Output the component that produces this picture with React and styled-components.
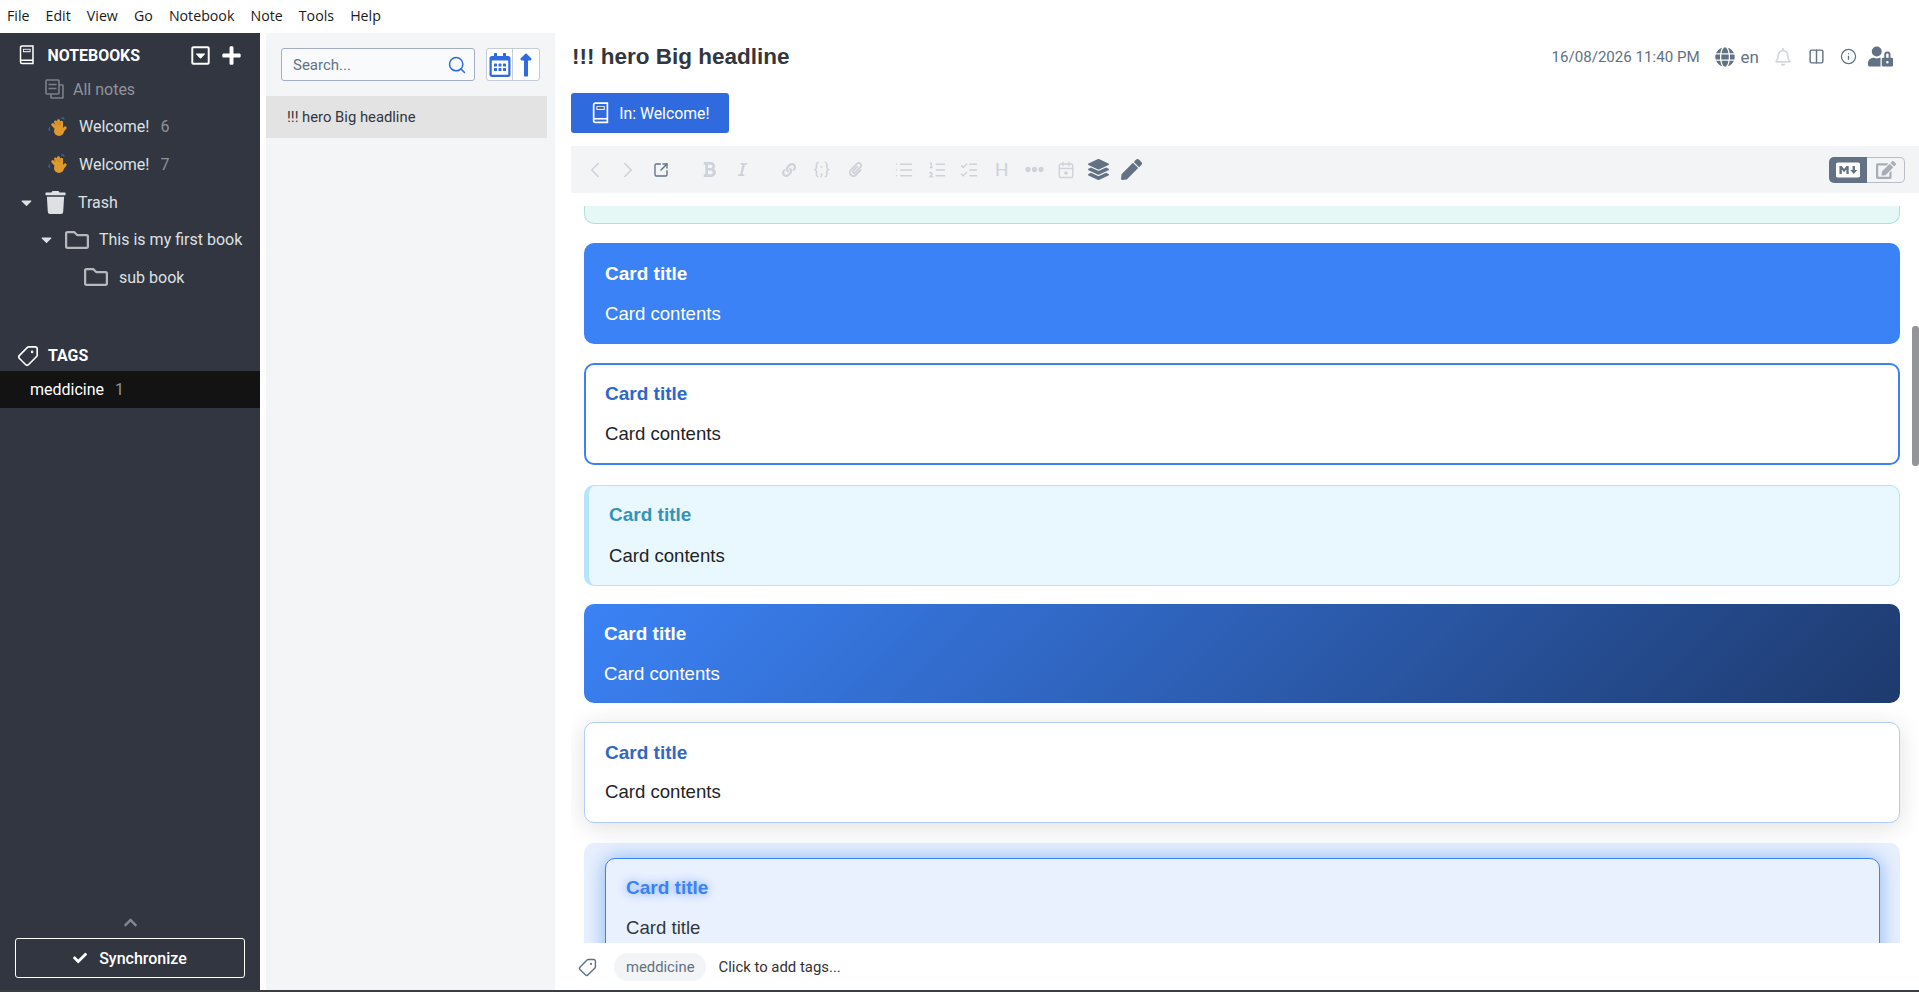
import React from 'react'
import styled, { createGlobalStyle } from 'styled-components'
import {
  FaRegCaretSquareDown,
  FaPlus,
  FaTrash,
  FaRegFolder,
  FaCaretDown,
  FaCheck,
  FaRegCalendarAlt,
  FaLongArrowAltUp,
  FaBold,
  FaItalic,
  FaLink,
  FaPaperclip,
  FaEllipsisH,
  FaLayerGroup,
  FaPen,
  FaGlobe,
  FaRegBell,
  FaUserLock,
  FaMarkdown,
  FaEdit,
  FaChevronUp,
} from 'react-icons/fa'
import {
  ChevronLeft,
  ChevronRight,
  SquareArrowOutUpRight,
  Search,
  Columns2,
  Info,
  Tag,
  List,
  ListOrdered,
  ListChecks,
  CalendarPlus2,
} from 'lucide-react'

const GlobalStyle = createGlobalStyle`
  html, body {
    margin: 0;
    padding: 0;
    height: 100%;
    overflow: hidden;
    background: #fff;
    font-family: Roboto, "Liberation Sans", sans-serif;
  }
  #root { height: 100%; }
  * { box-sizing: border-box; }
`

const AppWrapper = styled.div`
  display: flex;
  flex-direction: column;
  height: 992px;
  width: 1919px;
  border-bottom: 2px solid #3a3d42;
`

const MenuBar = styled.div`
  display: flex;
  align-items: center;
  height: 33px;
  padding: 0 0 2px 7px;
  gap: 16.1px;
  font-family: "Open Sans", sans-serif;
  font-size: 14.2px;
  color: #1a1a1a;
`

const Panes = styled.div`
  flex: 1;
  display: flex;
  min-height: 0;
`

const Sidebar = styled.div`
  width: 260px;
  margin-right: 6px;
  background: #313640;
  color: #dee0e3;
  display: flex;
  flex-direction: column;
  font-size: 16px;
`

const SideHeader = styled.div`
  display: flex;
  align-items: center;
  height: ${({ $h }) => $h}px;
  padding: ${({ $top }) => $top || 0}px 18px 0 ${({ $left }) => $left}px;
  color: #fff;
  font-weight: 700;
  font-size: 15.9px;
`

const HeaderLabel = styled.span`
  flex: 1;
  margin-left: ${({ $gap }) => $gap}px;
`

const HeaderTools = styled.div`
  display: flex;
  align-items: center;
  gap: 10px;
`

const TreeRow = styled.div`
  display: flex;
  align-items: center;
  height: 37.6px;
  padding-left: ${({ $indent }) => $indent}px;
  color: ${({ $muted }) => ($muted ? '#8f939b' : '#dee0e3')};
`

const TreeCaret = styled.span`
  display: flex;
  justify-content: center;
  width: 20px;
  margin-left: -3px;
  margin-right: 9px;
  color: #dee0e3;
  font-size: 17px;
`

const TreeIcon = styled.span`
  display: flex;
  justify-content: center;
  width: ${({ $w }) => $w}px;
  margin-right: ${({ $mr }) => $mr}px;
`

const Count = styled.span`
  margin-left: 11px;
  color: #8f939b;
`

const Spacer = styled.div`
  height: ${({ $h }) => $h}px;
`

const TagRow = styled.div`
  display: flex;
  align-items: center;
  height: 37px;
  padding-left: 30px;
  background: #131313;
  color: #fff;
`

const SideBottom = styled.div`
  margin-top: auto;
  padding: 0 15px 12px 15px;
  display: flex;
  flex-direction: column;
  align-items: center;
`

const ChevronWrap = styled.div`
  display: flex;
  color: #85878d;
  font-size: 15px;
  margin-bottom: 8px;
`

const SyncButton = styled.button`
  width: 100%;
  height: 40px;
  background: transparent;
  border: 1px solid #fff;
  border-radius: 3px;
  color: #fff;
  font: 500 16px Roboto, sans-serif;
  display: flex;
  align-items: center;
  justify-content: center;
  gap: 12px;
`

const NoteList = styled.div`
  width: 289px;
  background: #f4f5f6;
  display: flex;
  flex-direction: column;
`

const SearchRow = styled.div`
  display: flex;
  align-items: center;
  height: 63px;
  padding-left: 15px;
  gap: 11px;
`

const SearchBox = styled.div`
  width: 194px;
  height: 33px;
  border: 1px solid #a3aec2;
  border-radius: 3px;
  background: #f9fafb;
  display: flex;
  align-items: center;
  justify-content: space-between;
  padding: 0 7px 0 11px;
  color: #627184;
  font-size: 15px;
`

const SortGroup = styled.div`
  display: flex;
  width: 54px;
  height: 33px;
  border: 1px solid #c5ccd8;
  border-radius: 3px;
  background: #fff;
  color: #2f6bdf;
`

const SortCell = styled.div`
  flex: ${({ $grow }) => $grow};
  display: flex;
  align-items: center;
  justify-content: center;
  border-left: ${({ $divided }) => ($divided ? '1px solid #c5ccd8' : 'none')};
`

const NoteItem = styled.div`
  width: 281px;
  height: 42px;
  display: flex;
  align-items: center;
  padding-left: 21px;
  background: #e3e3e3;
  color: #32373f;
  font-size: 14.8px;
`

const Editor = styled.div`
  flex: 1;
  min-width: 0;
  display: flex;
  flex-direction: column;
  padding-left: 16px;
`

const TitleRow = styled.div`
  display: flex;
  align-items: center;
  justify-content: space-between;
  height: 47px;
  padding-right: 26px;
`

const Title = styled.div`
  font: 700 22.5px "Liberation Sans", sans-serif;
  color: #32373f;
  margin-left: 1px;
`

const NoteMeta = styled.div`
  display: flex;
  align-items: center;
  color: #627184;
  font-size: 15.1px;
`

const MetaIcon = styled.span`
  display: flex;
  margin-left: ${({ $ml }) => $ml}px;
  color: ${({ $faded }) => ($faded ? '#d6d9de' : '#627184')};
`

const Lang = styled.span`
  margin-left: 6px;
  font-size: 17px;
`

const NotebookButton = styled.button`
  width: 158px;
  height: 40px;
  margin-top: 13px;
  border: none;
  border-radius: 3px;
  background: #2f6bdf;
  color: #fff;
  display: flex;
  align-items: center;
  padding-left: 21px;
  gap: 10px;
  font: 400 15.8px Roboto, sans-serif;
`

const Toolbar = styled.div`
  height: 47px;
  margin-top: 13px;
  background: #f3f4f6;
  display: flex;
  align-items: center;
  padding: 0 14px 0 7px;
`

const ToolGroup = styled.div`
  display: grid;
  grid-auto-flow: column;
  grid-auto-columns: ${({ $slot }) => $slot}px;
  margin-left: ${({ $ml }) => $ml}px;
`

const ToolIcon = styled.span`
  display: flex;
  align-items: center;
  justify-content: center;
  color: ${({ $on }) => ($on ? '#627184' : '#ced2d9')};
  font-size: ${({ $size }) => $size}px;
  letter-spacing: ${({ $track }) => $track || 0}px;
`

const ViewToggle = styled.div`
  margin-left: auto;
  display: flex;
  width: 76px;
  height: 26px;
`

const ToggleLeft = styled.div`
  width: 38px;
  background: #627184;
  border-radius: 5px 0 0 5px;
  color: #fff;
  display: flex;
  align-items: center;
  justify-content: center;
`

const ToggleRight = styled.div`
  flex: 1;
  border: 1px solid #b9bec6;
  border-left: none;
  border-radius: 0 5px 5px 0;
  color: #a9aeb6;
  display: flex;
  align-items: center;
  justify-content: center;
`

const Viewer = styled.div`
  flex: 1;
  min-height: 0;
  margin-top: 13px;
  overflow: hidden;
  padding: 0 19px 0 13px;
  position: relative;
  font-family: "Liberation Sans", sans-serif;
  font-size: 18.6px;
  color: #1f2328;
`

const ScrollThumb = styled.div`
  position: absolute;
  right: 0;
  top: 120px;
  width: 7px;
  height: 140px;
  border-radius: 3px;
  background: #939598;
`

const CardTitle = styled.div`
  font-weight: 700;
  font-size: 19px;
  margin-bottom: 18.5px;
  line-height: 22px;
`

const CardBody = styled.div`
  line-height: 22px;
`

const TealStub = styled.div`
  height: 18px;
  background: #e5f8f5;
  border: 1px solid #abe3d9;
  border-top: none;
  border-radius: 0 0 10px 10px;
  margin-bottom: 19px;
`

const Card = styled.div`
  height: 101px;
  margin-bottom: 19px;
  border-radius: 10px;
  padding: 19px 20px 0;
`

const SolidCard = styled(Card)`
  background: #3b82f6;
  color: #fff;
  padding: 20px 20px 0 21px;
  ${CardTitle} { margin-bottom: 17.5px; }
`

const OutlineCard = styled(Card)`
  height: 102px;
  background: #fff;
  border: 2px solid #3b82f6;
  padding: 18px 19px 0;
  margin-bottom: 20px;
  ${CardTitle} { color: #2f66c9; margin-bottom: 17.5px; }
`

const InfoCard = styled(Card)`
  background: #e9f7fe;
  border: 1px solid #b3e5fc;
  border-left: 5px solid #b3e5fc;
  padding: 18px 20px 0;
  margin-bottom: 18px;
  ${CardTitle} { color: #3593b9; }
`

const GradientCard = styled(Card)`
  height: 99px;
  background: linear-gradient(135deg, #3b82f6 0%, #1e3a6e 100%);
  color: #fff;
  margin-bottom: 19px;
  ${CardTitle} { margin-bottom: 18px; }
`

const ShadowCard = styled(Card)`
  height: 101px;
  background: #fff;
  border: 1px solid #b3cdfb;
  box-shadow: 0 4px 24px rgba(0, 0, 0, 0.13);
  padding: 19px 20px 0;
  ${CardTitle} { color: #3366c4; margin-bottom: 17px; }
`

const GlowOuter = styled.div`
  margin-top: 20px;
  height: 200px;
  padding: 15px 20px 0 21px;
  border-radius: 10px;
  background: #e8f0fd;
`

const GlowInner = styled.div`
  height: 180px;
  padding: 18px 20px 0;
  border: 1px solid #3b82f6;
  border-radius: 10px;
  background: #eaf1fe;
  box-shadow: 0 0 20px rgba(59, 130, 246, 0.55);
  color: #32373f;
  ${CardTitle} {
    color: #3b82f6;
    margin-bottom: 17.5px;
    text-shadow: 0 0 10px rgba(59, 130, 246, 0.7);
  }
`

const TagBar = styled.div`
  height: 47px;
  display: flex;
  align-items: center;
  padding: 1px 0 0 7px;
  color: #333;
  font-size: 14.9px;
`

const TagChip = styled.span`
  height: 28px;
  display: flex;
  align-items: center;
  margin: 0 12px 0 17px;
  padding: 0 12px;
  border-radius: 14px;
  background: #f3f4f6;
  color: #627184;
  font-size: 14.8px;
`

const FlippedTag = styled(Tag)`
  transform: scaleX(-1);
`

function NotebookIcon({ size = 20, color = 'currentColor' }) {
  return (
    <svg width={size * 0.78} height={size} viewBox="0 0 16 21" fill="none" stroke={color} strokeWidth="1.6">
      <path d="M3 1h11.5v18.5H3a1.6 1.6 0 0 1-1.6-1.6V2.6A1.6 1.6 0 0 1 3 1z" />
      <path d="M1.4 16h13" />
      <rect x="4" y="4" width="8" height="3.6" fill={color} stroke="none" opacity="0.9" />
      <rect x="5" y="5" width="6" height="1.4" fill="#313640" stroke="none" />
    </svg>
  )
}

function AllNotesIcon() {
  return (
    <svg width="19" height="20" viewBox="0 0 19 20" fill="none" stroke="#7c8089" strokeWidth="1.6">
      <rect x="1" y="1" width="13" height="14" rx="1" />
      <path d="M6 15v3.5a.5.5 0 0 0 .5.5H17.5a.5.5 0 0 0 .5-.5V6.5a.5.5 0 0 0-.5-.5H14" />
      <path d="M3.5 5.5h8M3.5 9.5h8" />
    </svg>
  )
}

function WaveHand() {
  return (
    <svg width="20" height="20" viewBox="0 0 20 20">
      <path d="M1.300 13.500c-.4-1-.2-2 .4-2.800M13.500 1c1-.2 1.900.1 2.500.8" fill="none" stroke="#2f6fb0" strokeWidth="1.200" strokeLinecap="round" />
      <g stroke="#e09a2c" strokeWidth="3" strokeLinecap="round">
        <path d="M10 13L4.800 7.600M10.500 12L7.600 5M12 12L10.500 3.800M13.500 12L13.600 5.200M14.500 14L17.200 10.800" />
      </g>
      <circle cx="11" cy="14" r="5" fill="#e09a2c" />
      <path d="M8 8.700L6.300 5.800M10.400 8L9.300 4.600M12.400 8L12.100 4.600" stroke="#b97a1c" strokeWidth=".6" />
    </svg>
  )
}

function TagsIcon({ size = 20, color = 'currentColor' }) {
  return <FlippedTag size={size} color={color} strokeWidth={1.8} />
}

const toolGroups = [
  {
    slot: 33,
    ml: 0,
    tools: [
      { id: 'back', icon: <ChevronLeft size={26} strokeWidth={1.5} /> },
      { id: 'forward', icon: <ChevronRight size={26} strokeWidth={1.5} /> },
      { id: 'external', on: true, icon: <SquareArrowOutUpRight size={16} strokeWidth={2} /> },
    ],
  },
  {
    slot: 33,
    ml: 15.5,
    tools: [
      { id: 'bold', icon: <FaBold size={17} /> },
      { id: 'italic', icon: <FaItalic size={15} /> },
    ],
  },
  {
    slot: 33,
    ml: 14,
    tools: [
      { id: 'link', icon: <FaLink size={14} /> },
      { id: 'code', size: 16, track: 1, icon: '{;}' },
      { id: 'attach', icon: <FaPaperclip size={15} /> },
    ],
  },
  {
    slot: 32.4,
    ml: 16.8,
    tools: [
      { id: 'ul', icon: <List size={20} strokeWidth={1.8} /> },
      { id: 'ol', icon: <ListOrdered size={20} strokeWidth={1.8} /> },
      { id: 'checks', icon: <ListChecks size={20} strokeWidth={1.8} /> },
      { id: 'heading', size: 19, icon: 'H' },
      { id: 'more', icon: <FaEllipsisH size={19} /> },
      { id: 'date', icon: <CalendarPlus2 size={18} strokeWidth={1.8} /> },
      { id: 'layers', on: true, icon: <FaLayerGroup size={21} /> },
      { id: 'pen', on: true, icon: <FaPen size={21} /> },
    ],
  },
]

export default function App() {
  return (
    <AppWrapper>
      <GlobalStyle />
      <MenuBar>
        {['File', 'Edit', 'View', 'Go', 'Notebook', 'Note', 'Tools', 'Help'].map((m) => (
          <span key={m}>{m}</span>
        ))}
      </MenuBar>
      <Panes>
        <Sidebar>
          <SideHeader $h={37.5} $top={7} $left={19}>
            <NotebookIcon size={20} />
            <HeaderLabel $gap={13}>NOTEBOOKS</HeaderLabel>
            <HeaderTools>
              <FaRegCaretSquareDown size={21} />
              <FaPlus size={21} />
            </HeaderTools>
          </SideHeader>
          <TreeRow $indent={45} $muted>
            <TreeIcon $w={19} $mr={9}>
              <AllNotesIcon />
            </TreeIcon>
            All notes
          </TreeRow>
          <TreeRow $indent={48}>
            <TreeIcon $w={20} $mr={11}>
              <WaveHand />
            </TreeIcon>
            Welcome!<Count>6</Count>
          </TreeRow>
          <TreeRow $indent={48}>
            <TreeIcon $w={20} $mr={11}>
              <WaveHand />
            </TreeIcon>
            Welcome!<Count>7</Count>
          </TreeRow>
          <TreeRow $indent={19}>
            <TreeCaret>
              <FaCaretDown />
            </TreeCaret>
            <TreeIcon $w={21} $mr={12}>
              <FaTrash size={23} />
            </TreeIcon>
            Trash
          </TreeRow>
          <TreeRow $indent={39}>
            <TreeCaret>
              <FaCaretDown />
            </TreeCaret>
            <TreeIcon $w={24} $mr={10}>
              <FaRegFolder size={24} color="#b6b8bc" />
            </TreeIcon>
            This is my first book
          </TreeRow>
          <TreeRow $indent={84}>
            <TreeIcon $w={24} $mr={11}>
              <FaRegFolder size={24} color="#b6b8bc" />
            </TreeIcon>
            sub book
          </TreeRow>
          <Spacer $h={44} />
          <SideHeader $h={31} $left={17}>
            <TagsIcon size={22} />
            <HeaderLabel $gap={9}>TAGS</HeaderLabel>
          </SideHeader>
          <TagRow>
            meddicine<Count>1</Count>
          </TagRow>
          <SideBottom>
            <ChevronWrap>
              <FaChevronUp />
            </ChevronWrap>
            <SyncButton>
              <FaCheck size={14} />
              Synchronize
            </SyncButton>
          </SideBottom>
        </Sidebar>
        <NoteList>
          <SearchRow>
            <SearchBox>
              Search...
              <Search size={20} color="#2f6bdf" strokeWidth={1.8} />
            </SearchBox>
            <SortGroup>
              <SortCell $grow={31}>
                <FaRegCalendarAlt size={24} />
              </SortCell>
              <SortCell $grow={21} $divided>
                <FaLongArrowAltUp size={26} />
              </SortCell>
            </SortGroup>
          </SearchRow>
          <NoteItem>!!! hero Big headline</NoteItem>
        </NoteList>
        <Editor>
          <TitleRow>
            <Title>!!! hero Big headline</Title>
            <NoteMeta>
              16/08/2026 11:40 PM
              <MetaIcon $ml={15}>
                <FaGlobe size={20} />
              </MetaIcon>
              <Lang>en</Lang>
              <MetaIcon $ml={15} $faded>
                <FaRegBell size={18} />
              </MetaIcon>
              <MetaIcon $ml={16}>
                <Columns2 size={17} strokeWidth={2} />
              </MetaIcon>
              <MetaIcon $ml={15}>
                <Info size={17} strokeWidth={1.8} />
              </MetaIcon>
              <MetaIcon $ml={11}>
                <FaUserLock size={25} />
              </MetaIcon>
            </NoteMeta>
          </TitleRow>
          <NotebookButton>
            <NotebookIcon size={22} color="#fff" />
            In: Welcome!
          </NotebookButton>
          <Toolbar>
            {toolGroups.map((g) => (
              <ToolGroup key={g.tools[0].id} $slot={g.slot} $ml={g.ml}>
                {g.tools.map((t) => (
                  <ToolIcon key={t.id} $on={t.on} $size={t.size} $track={t.track}>
                    {t.icon}
                  </ToolIcon>
                ))}
              </ToolGroup>
            ))}
            <ViewToggle>
              <ToggleLeft>
                <FaMarkdown size={24} />
              </ToggleLeft>
              <ToggleRight>
                <FaEdit size={20} />
              </ToggleRight>
            </ViewToggle>
          </Toolbar>
          <Viewer>
            <TealStub />
            <SolidCard>
              <CardTitle>Card title</CardTitle>
              <CardBody>Card contents</CardBody>
            </SolidCard>
            <OutlineCard>
              <CardTitle>Card title</CardTitle>
              <CardBody>Card contents</CardBody>
            </OutlineCard>
            <InfoCard>
              <CardTitle>Card title</CardTitle>
              <CardBody>Card contents</CardBody>
            </InfoCard>
            <GradientCard>
              <CardTitle>Card title</CardTitle>
              <CardBody>Card contents</CardBody>
            </GradientCard>
            <ShadowCard>
              <CardTitle>Card title</CardTitle>
              <CardBody>Card contents</CardBody>
            </ShadowCard>
            <GlowOuter>
              <GlowInner>
                <CardTitle>Card title</CardTitle>
                <CardBody>Card title</CardBody>
              </GlowInner>
            </GlowOuter>
            <ScrollThumb />
          </Viewer>
          <TagBar>
            <TagsIcon size={19} color="#627184" />
            <TagChip>meddicine</TagChip>
            Click to add tags...
          </TagBar>
        </Editor>
      </Panes>
    </AppWrapper>
  )
}
